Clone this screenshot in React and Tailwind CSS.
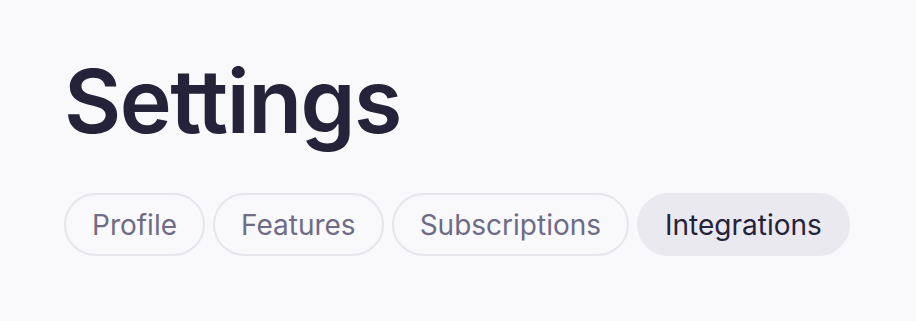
import React, { useState } from "react";

const tabs = ["Profile", "Features", "Subscriptions", "Integrations"];

const App = () => {
  const [active, setActive] = useState("Integrations");

  return (
    <div className="min-h-[321px] w-full bg-[#f9f9fb] px-[64px] pt-[46px] font-['Inter',sans-serif]">
      <h1 className="text-[88px] font-semibold leading-[110px] tracking-[-1.5px] text-[#25233a]">Settings</h1>
      <div className="mt-[37px] flex gap-[8px]">
        {tabs.map((tab) => (
          <button
            key={tab}
            onClick={() => setActive(tab)}
            className={
              tab === active
                ? "h-[63px] rounded-full border-2 border-[#e9e9ef] bg-[#e9e9ef] px-[26px] text-[28px] text-[#25233a]"
                : "h-[63px] rounded-full border-2 border-[#e6e6ec] bg-transparent px-[26px] text-[28px] text-[#6f6b86]"
            }
          >
            {tab}
          </button>
        ))}
      </div>
    </div>
  );
};

export default App;
